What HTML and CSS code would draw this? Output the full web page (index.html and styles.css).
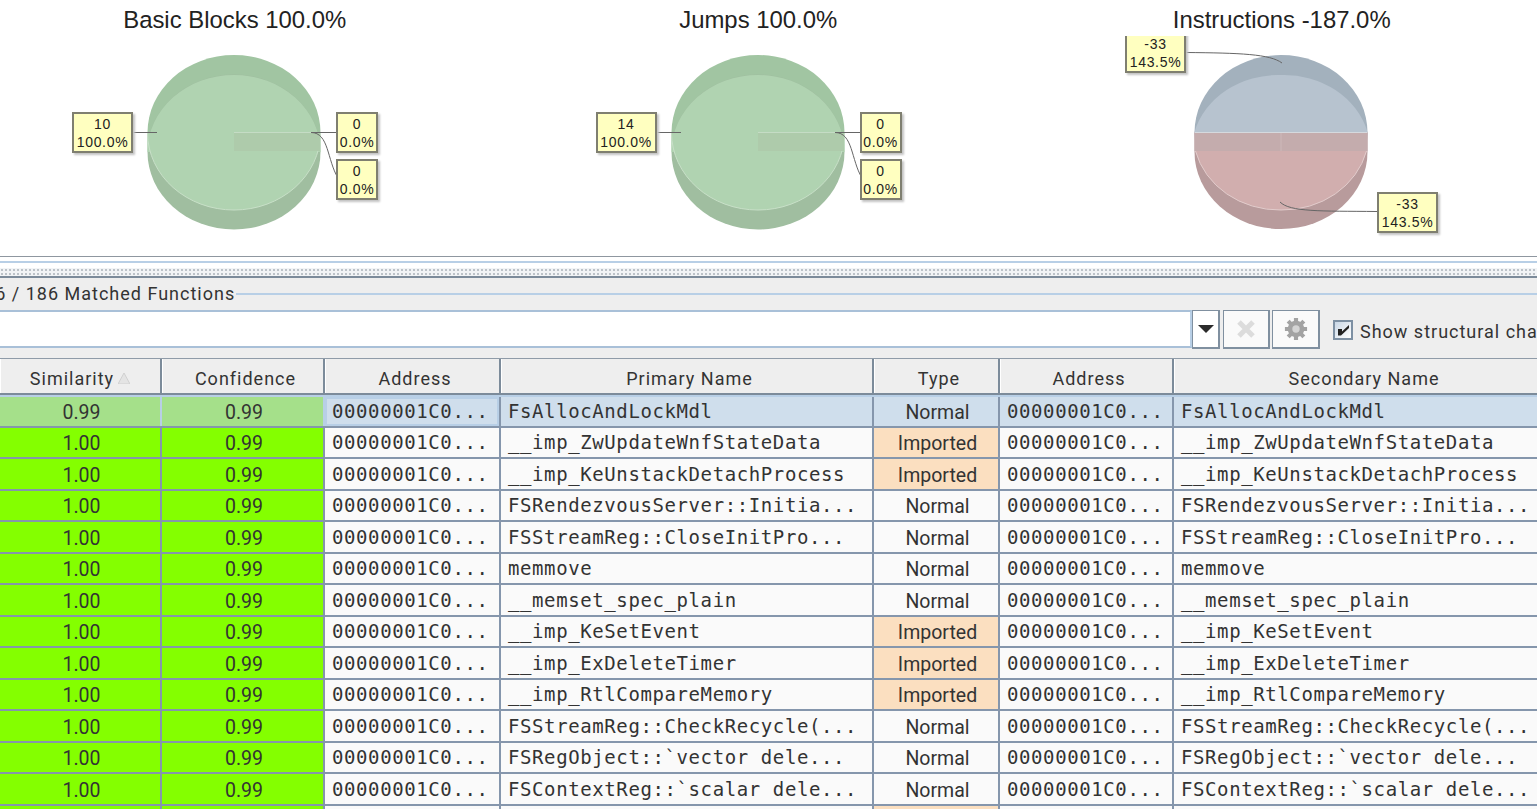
FILE: index.html
```html
<!DOCTYPE html>
<html lang="en">
<head>
    <meta charset="UTF-8">
    <title>Matched Functions</title>
    <link rel="stylesheet" href="styles.css">
</head>
<body>
    <div class="charts">
        <div class="chart">
            <div class="chart-title">Basic Blocks 100.0%</div>
            <svg class="pie" width="524" height="255" viewBox="0 0 524 255">
                <ellipse cx="261" cy="132.5" rx="86.5" ry="77.5" fill="#a1c5a2"/>
                <ellipse cx="261" cy="152" rx="86.5" ry="77.5" fill="#a0bea0"/>
                <rect x="174.5" y="132" width="173" height="20" fill="#b0d3b1"/>
                <path d="M174.5 152 A86.5 77 0 0 1 261 75 A86.5 77 0 0 1 347.5 152 L347.5 133 A86.5 77.5 0 0 1 261 210 A86.5 77.5 0 0 1 174.5 133 Z" fill="#b0d3b1"/>
                <path d="M174.5 133 A86.5 77.5 0 0 0 261 210 A86.5 77.5 0 0 0 347.5 133" fill="none" stroke="#c8e0c8"/>
                <rect x="261" y="132" width="86" height="19" fill="#aecbab"/>
                <path d="M261 132.5 H347" stroke="#c5dcc5"/>
                <path d="M160 132.5 H184" class="leader"/>
                <path d="M363 132.5 H338" class="leader"/>
                <path d="M338 132.5 C356 132.5 354 160 365 178" class="leader"/>
            </svg>
            <div class="tag tag-left">10<br>100.0%</div>
            <div class="tag tag-right">0<br>0.0%</div>
            <div class="tag tag-right2">0<br>0.0%</div>
        </div>
        <div class="chart">
            <div class="chart-title">Jumps 100.0%</div>
            <svg class="pie" width="524" height="255" viewBox="0 0 524 255">
                <ellipse cx="261" cy="132.5" rx="86.5" ry="77.5" fill="#a1c5a2"/>
                <ellipse cx="261" cy="152" rx="86.5" ry="77.5" fill="#a0bea0"/>
                <rect x="174.5" y="132" width="173" height="20" fill="#b0d3b1"/>
                <path d="M174.5 152 A86.5 77 0 0 1 261 75 A86.5 77 0 0 1 347.5 152 L347.5 133 A86.5 77.5 0 0 1 261 210 A86.5 77.5 0 0 1 174.5 133 Z" fill="#b0d3b1"/>
                <path d="M174.5 133 A86.5 77.5 0 0 0 261 210 A86.5 77.5 0 0 0 347.5 133" fill="none" stroke="#c8e0c8"/>
                <rect x="261" y="132" width="86" height="19" fill="#aecbab"/>
                <path d="M261 132.5 H347" stroke="#c5dcc5"/>
                <path d="M160 132.5 H184" class="leader"/>
                <path d="M363 132.5 H338" class="leader"/>
                <path d="M338 132.5 C356 132.5 354 160 365 178" class="leader"/>
            </svg>
            <div class="tag tag-left">14<br>100.0%</div>
            <div class="tag tag-right">0<br>0.0%</div>
            <div class="tag tag-right2">0<br>0.0%</div>
        </div>
        <div class="chart">
            <div class="chart-title">Instructions -187.0%</div>
            <svg class="pie" width="524" height="255" viewBox="0 0 524 255">
                <ellipse cx="261" cy="132.5" rx="86.5" ry="77.5" fill="#a3b1bd"/>
                <path d="M174.5 152 A86.5 77 0 0 0 347.5 152 V132 H174.5 Z" fill="#b89b9c"/>
                <path d="M174.5 132 A86.5 77 0 0 1 261 75 A86.5 77 0 0 1 347.5 132 Z" fill="#b7c3cf"/>
                <path d="M174.5 132 H347.5 V151 H174.5 Z" fill="#c4acad"/>
                <path d="M175.5 151 A86.5 77.5 0 0 0 261 210 A86.5 77.5 0 0 0 346.5 151 Z" fill="#d1aeae"/>
                <path d="M175.5 151 A86.5 77.5 0 0 0 261 210 A86.5 77.5 0 0 0 346.5 151" fill="none" stroke="#e2cccc"/>
                <path d="M261 133 V151" stroke="#cdb8b9"/>
                <path d="M174.5 132.5 H347.5" stroke="#d5d9de"/>
                <path d="M166 52.5 C220 53 250 54 262 63" class="leader"/>
                <path d="M357 211.5 C300 211 270 212 260 202" class="leader"/>
            </svg>
            <div class="tag tag-top">-33<br>143.5%</div>
            <div class="tag tag-bottom">-33<br>143.5%</div>
        </div>
    </div>

    <div class="splitter">
        <div class="splitter-line"></div>
        <div class="splitter-grip"></div>
    </div>

    <div class="panel">
        <div class="legend"><span class="legend-text">186 / 186 Matched Functions</span></div>
        <div class="filter-bar">
            <div class="filter-input"></div>
            <div class="tool-btn drop-btn"><svg width="16" height="8" viewBox="0 0 16 8"><path d="M0 0 H16 L8 8 Z" fill="#2b2b2b"/></svg></div>
            <div class="tool-btn clear-btn">
                <svg width="20" height="20" viewBox="0 0 20 20"><path d="M3 3 L17 17 M17 3 L3 17" stroke="#dcdcdc" stroke-width="5"/></svg>
            </div>
            <div class="tool-btn gear-btn">
                <svg width="24" height="24" viewBox="0 0 26 26">
                    <path d="M13 1 V25 M1 13 H25 M4.5 4.5 L21.5 21.5 M21.5 4.5 L4.5 21.5" stroke="#a3a3a3" stroke-width="4.5"/>
                    <circle cx="13" cy="13" r="9" fill="#a3a3a3"/>
                    <circle cx="13" cy="13" r="4" fill="#d4d4d4"/>
                </svg>
            </div>
            <div class="check"><svg width="14" height="14" viewBox="0 0 14 14"><path d="M2 6 H6 V8.5 L13 2 V5 L5 12.5 H2 Z" fill="#222"/></svg></div>
            <span class="check-label">Show structural changes</span>
        </div>
    </div>

    <div class="table">
        <div class="row head">
            <div class="cell sorted">Similarity<svg class="sort" width="12" height="11" viewBox="0 0 12 11"><path d="M6 0 L12 11 H0 Z" fill="#e4e4e4" stroke="#d0d0d0"/></svg></div>
            <div class="cell">Confidence</div>
            <div class="cell">Address</div>
            <div class="cell">Primary Name</div>
            <div class="cell">Type</div>
            <div class="cell">Address</div>
            <div class="cell">Secondary Name</div>
        </div>
        <div class="row selected">
            <div class="cell num pale">0.99</div><div class="cell num pale">0.99</div>
            <div class="cell code focus">00000001C0...</div><div class="cell code">FsAllocAndLockMdl</div>
            <div class="cell num">Normal</div>
            <div class="cell code">00000001C0...</div><div class="cell code">FsAllocAndLockMdl</div>
        </div>
        <div class="row">
            <div class="cell num lime">1.00</div><div class="cell num lime">0.99</div>
            <div class="cell code">00000001C0...</div><div class="cell code">__imp_ZwUpdateWnfStateData</div>
            <div class="cell num imported">Imported</div>
            <div class="cell code">00000001C0...</div><div class="cell code">__imp_ZwUpdateWnfStateData</div>
        </div>
        <div class="row">
            <div class="cell num lime">1.00</div><div class="cell num lime">0.99</div>
            <div class="cell code">00000001C0...</div><div class="cell code">__imp_KeUnstackDetachProcess</div>
            <div class="cell num imported">Imported</div>
            <div class="cell code">00000001C0...</div><div class="cell code">__imp_KeUnstackDetachProcess</div>
        </div>
        <div class="row">
            <div class="cell num lime">1.00</div><div class="cell num lime">0.99</div>
            <div class="cell code">00000001C0...</div><div class="cell code">FSRendezvousServer::Initia...</div>
            <div class="cell num">Normal</div>
            <div class="cell code">00000001C0...</div><div class="cell code">FSRendezvousServer::Initia...</div>
        </div>
        <div class="row">
            <div class="cell num lime">1.00</div><div class="cell num lime">0.99</div>
            <div class="cell code">00000001C0...</div><div class="cell code">FSStreamReg::CloseInitPro...</div>
            <div class="cell num">Normal</div>
            <div class="cell code">00000001C0...</div><div class="cell code">FSStreamReg::CloseInitPro...</div>
        </div>
        <div class="row">
            <div class="cell num lime">1.00</div><div class="cell num lime">0.99</div>
            <div class="cell code">00000001C0...</div><div class="cell code">memmove</div>
            <div class="cell num">Normal</div>
            <div class="cell code">00000001C0...</div><div class="cell code">memmove</div>
        </div>
        <div class="row">
            <div class="cell num lime">1.00</div><div class="cell num lime">0.99</div>
            <div class="cell code">00000001C0...</div><div class="cell code">__memset_spec_plain</div>
            <div class="cell num">Normal</div>
            <div class="cell code">00000001C0...</div><div class="cell code">__memset_spec_plain</div>
        </div>
        <div class="row">
            <div class="cell num lime">1.00</div><div class="cell num lime">0.99</div>
            <div class="cell code">00000001C0...</div><div class="cell code">__imp_KeSetEvent</div>
            <div class="cell num imported">Imported</div>
            <div class="cell code">00000001C0...</div><div class="cell code">__imp_KeSetEvent</div>
        </div>
        <div class="row">
            <div class="cell num lime">1.00</div><div class="cell num lime">0.99</div>
            <div class="cell code">00000001C0...</div><div class="cell code">__imp_ExDeleteTimer</div>
            <div class="cell num imported">Imported</div>
            <div class="cell code">00000001C0...</div><div class="cell code">__imp_ExDeleteTimer</div>
        </div>
        <div class="row">
            <div class="cell num lime">1.00</div><div class="cell num lime">0.99</div>
            <div class="cell code">00000001C0...</div><div class="cell code">__imp_RtlCompareMemory</div>
            <div class="cell num imported">Imported</div>
            <div class="cell code">00000001C0...</div><div class="cell code">__imp_RtlCompareMemory</div>
        </div>
        <div class="row">
            <div class="cell num lime">1.00</div><div class="cell num lime">0.99</div>
            <div class="cell code">00000001C0...</div><div class="cell code">FSStreamReg::CheckRecycle(...</div>
            <div class="cell num">Normal</div>
            <div class="cell code">00000001C0...</div><div class="cell code">FSStreamReg::CheckRecycle(...</div>
        </div>
        <div class="row">
            <div class="cell num lime">1.00</div><div class="cell num lime">0.99</div>
            <div class="cell code">00000001C0...</div><div class="cell code">FSRegObject::`vector dele...</div>
            <div class="cell num">Normal</div>
            <div class="cell code">00000001C0...</div><div class="cell code">FSRegObject::`vector dele...</div>
        </div>
        <div class="row">
            <div class="cell num lime">1.00</div><div class="cell num lime">0.99</div>
            <div class="cell code">00000001C0...</div><div class="cell code">FSContextReg::`scalar dele...</div>
            <div class="cell num">Normal</div>
            <div class="cell code">00000001C0...</div><div class="cell code">FSContextReg::`scalar dele...</div>
        </div>
        <div class="row">
            <div class="cell num lime"></div><div class="cell num lime"></div>
            <div class="cell code"></div><div class="cell code"></div>
            <div class="cell num imported"></div>
            <div class="cell code"></div><div class="cell code"></div>
        </div>
    </div>
</body>
</html>
```

FILE: styles.css
```css
* {
    box-sizing: border-box;
}

html, body {
    height: 100%;
}

body {
    margin: 0;
    padding: 0;
    overflow: hidden;
    background: #eeeeee;
    font-family: "Roboto", sans-serif;
    color: #333333;
}

/* pie charts */
.charts {
    display: flex;
    height: 256px;
    margin-left: -27px;
    width: 1600px;
    background: #ffffff;
    overflow: hidden;
}

.chart {
    position: relative;
    flex: 0 0 523.5px;
    height: 256px;
}

.chart-title {
    padding-top: 6px;
    text-align: center;
    font-family: "Liberation Sans", sans-serif;
    font-size: 23.9px;
    line-height: 28px;
    color: #222222;
}

.pie {
    position: absolute;
    left: 0;
    top: 0;
}

.leader {
    fill: none;
    stroke: #666666;
    stroke-width: 1;
}

.tag {
    position: absolute;
    padding-top: 0.5px;
    background: #ffffc0;
    border: 2px solid #7f7f70;
    box-shadow: 2px 2px 2px #c4c4c4;
    text-align: center;
    font-family: "Liberation Sans", sans-serif;
    font-size: 14px;
    line-height: 18px;
    letter-spacing: 0.7px;
    color: #222222;
}

.tag-left {
    left: 99px;
    top: 112px;
    width: 61px;
    height: 41px;
}

.tag-right {
    left: 363px;
    top: 112px;
    width: 42px;
    height: 41px;
}

.tag-right2 {
    left: 363px;
    top: 159px;
    width: 42px;
    height: 41px;
}

/* the chart cuts this one off under the title */
.tag-top {
    left: 105px;
    top: 32px;
    width: 61px;
    height: 41px;
    clip-path: inset(4px -5px -5px -5px);
}

.tag-bottom {
    left: 357px;
    top: 192px;
    width: 61px;
    height: 41px;
}

/* split pane divider */
.splitter {
    height: 22px;
    padding-top: 4px;
    background: #ffffff;
    border-bottom: 2px solid #7c8b9a;
    border-top: 1px solid #8f97a0;
}

.splitter-line {
    height: 2px;
    background: #b8cfe6;
}

.splitter-grip {
    height: 8px;
    margin-top: 5px;
    background-color: #f2f4f6;
    background-image: radial-gradient(#bcc2c8 0.8px, transparent 1px);
    background-size: 4px 4px;
}

/* filter panel */
.panel {
    height: 81px;
    background: #eeeeee;
    border-bottom: 1px solid #8f9ba8;
}

.legend {
    position: relative;
    height: 32px;
    padding-top: 15px;
}

.legend::before {
    content: "";
    display: block;
    height: 2px;
    background: #b8cfe6;
}

.legend-text {
    position: absolute;
    left: -27px;
    top: 6px;
    padding-right: 1px;
    background: #eeeeee;
    font-size: 18px;
    line-height: 20px;
    letter-spacing: 1px;
    white-space: nowrap;
}

.filter-bar {
    display: flex;
    align-items: flex-start;
    height: 39px;
}

.filter-bar > * {
    flex-shrink: 0;
}

.filter-input {
    width: 1192px;
    height: 38px;
    background: #ffffff;
    border-top: 2px solid #a9c0d8;
    border-bottom: 2px solid #a9c0d8;
    border-right: 2px solid #b8cfe6;
}

.tool-btn {
    display: flex;
    align-items: center;
    justify-content: center;
    height: 39px;
    background: #fafafa;
    border: 2px solid #8090a0;
    border-left-width: 1px;
    border-top-width: 1px;
}

.drop-btn {
    width: 28px;
    background: #ffffff;
}

.clear-btn {
    width: 47px;
    margin-left: 3px;
}

.gear-btn {
    width: 48px;
    margin-left: 2px;
}

.check {
    display: flex;
    align-items: center;
    justify-content: center;
    width: 20px;
    height: 20px;
    margin: 10px 0 0 13px;
    background: linear-gradient(135deg, #c9d7e6, #ffffff);
    border: 2.5px solid #7d90a3;
}

.check-label {
    margin: 11px 0 0 7px;
    font-size: 18px;
    line-height: 22px;
    letter-spacing: 1px;
    white-space: nowrap;
}

/* functions table */
.table {
    display: flex;
    flex-direction: column;
    width: 1537px;
}

.row {
    display: grid;
    grid-template-columns: 162px 163px 176px 373px 126px 174px 374px;
    flex: 0 0 31.5px;
    height: 31.5px;
    background: #fafafa;
    border-bottom: 2px solid #8596ac;
}

.row.head {
    flex-basis: 36px;
    height: 36px;
    background: #eeeeee;
    border-bottom: 2px solid #7c8b9a;
}

.row.selected {
    background: #cfdeec;
    border-top: 2px solid #b8cfe6;
    flex-basis: 32.5px;
    height: 32.5px;
}

.cell {
    display: flex;
    align-items: center;
    overflow: hidden;
    border-right: 2px solid #8596ac;
    white-space: nowrap;
}

.cell:last-child {
    border-right: 0;
}

.head .cell {
    justify-content: center;
    padding: 4px 0 0 6px;
    font-size: 18px;
    letter-spacing: 1px;
    border-right: 2px solid #7c8b9a;
    box-shadow: inset 1px 0 0 #ffffff;
}

.head .cell:last-child {
    border-right: 0;
}

.head .sorted {
    padding-left: 0;
}

.sort {
    margin: 0 0 0 4px;
}

.num {
    justify-content: center;
    padding: 3px 0 0 3px;
    font-size: 19.5px;
}

.code {
    padding-left: 7px;
    font-family: "DejaVu Sans Mono", monospace;
    font-size: 19px;
    letter-spacing: 0.6px;
}

.lime {
    background: #84ff00;
}

.pale {
    background: #a5e08a;
    border-right-color: #b8cfe6;
}

.imported {
    background: #fbdfc0;
}

.focus {
    box-shadow: inset 0 0 0 2px #b8cfe6;
}
```
